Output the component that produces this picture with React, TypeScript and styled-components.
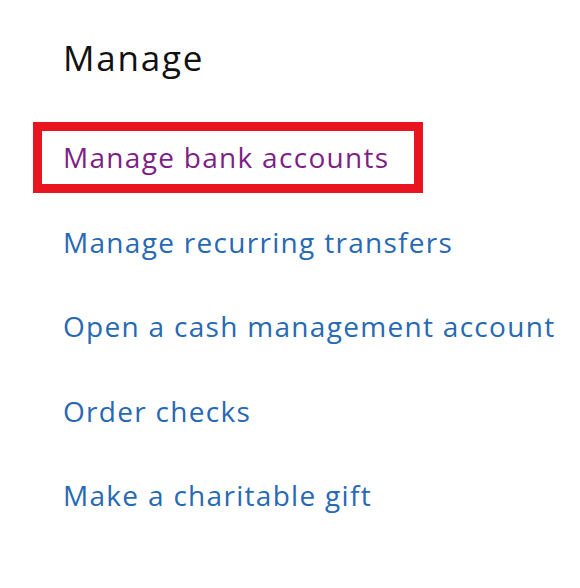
import styled, { createGlobalStyle } from 'styled-components'

const GlobalStyle = createGlobalStyle`
  html, body {
    margin: 0;
    padding: 0;
    background: #ffffff;
  }

  body {
    font-family: 'Open Sans', Lato, sans-serif;
  }
`

const Panel = styled.section`
  padding: 37px 0 0 33px;
  width: 580px;
  height: 588px;
  box-sizing: border-box;
`

const Heading = styled.h2`
  margin: 0 0 43px 30px;
  font-size: 35px;
  font-weight: 400;
  line-height: 42px;
  letter-spacing: 1.8px;
  color: #111111;
`

const LinkList = styled.ul`
  list-style: none;
  margin: 0;
  padding: 0;
  display: flex;
  flex-direction: column;
  gap: 13.5px;
`

const LinkItem = styled.li<{ $highlighted?: boolean }>`
  width: 390px;
  box-sizing: border-box;
  border: 9px solid ${(p) => (p.$highlighted ? '#e8141f' : 'transparent')};
  padding: 0 0 0 21px;
`

const NavLink = styled.a<{ $visited?: boolean }>`
  display: block;
  font-size: 28px;
  line-height: 53px;
  letter-spacing: 1.3px;
  white-space: nowrap;
  text-decoration: none;
  color: ${(p) => (p.$visited ? '#7d1f86' : '#2769b3')};
`

const links = [
  'Manage bank accounts',
  'Manage recurring transfers',
  'Open a cash management account',
  'Order checks',
  'Make a charitable gift',
]

function App() {
  return (
    <>
      <GlobalStyle />
      <Panel>
        <Heading>Manage</Heading>
        <LinkList>
          {links.map((label, i) => (
            <LinkItem key={label} $highlighted={i === 0}>
              <NavLink href='#' $visited={i === 0}>
                {label}
              </NavLink>
            </LinkItem>
          ))}
        </LinkList>
      </Panel>
    </>
  )
}

export default App
